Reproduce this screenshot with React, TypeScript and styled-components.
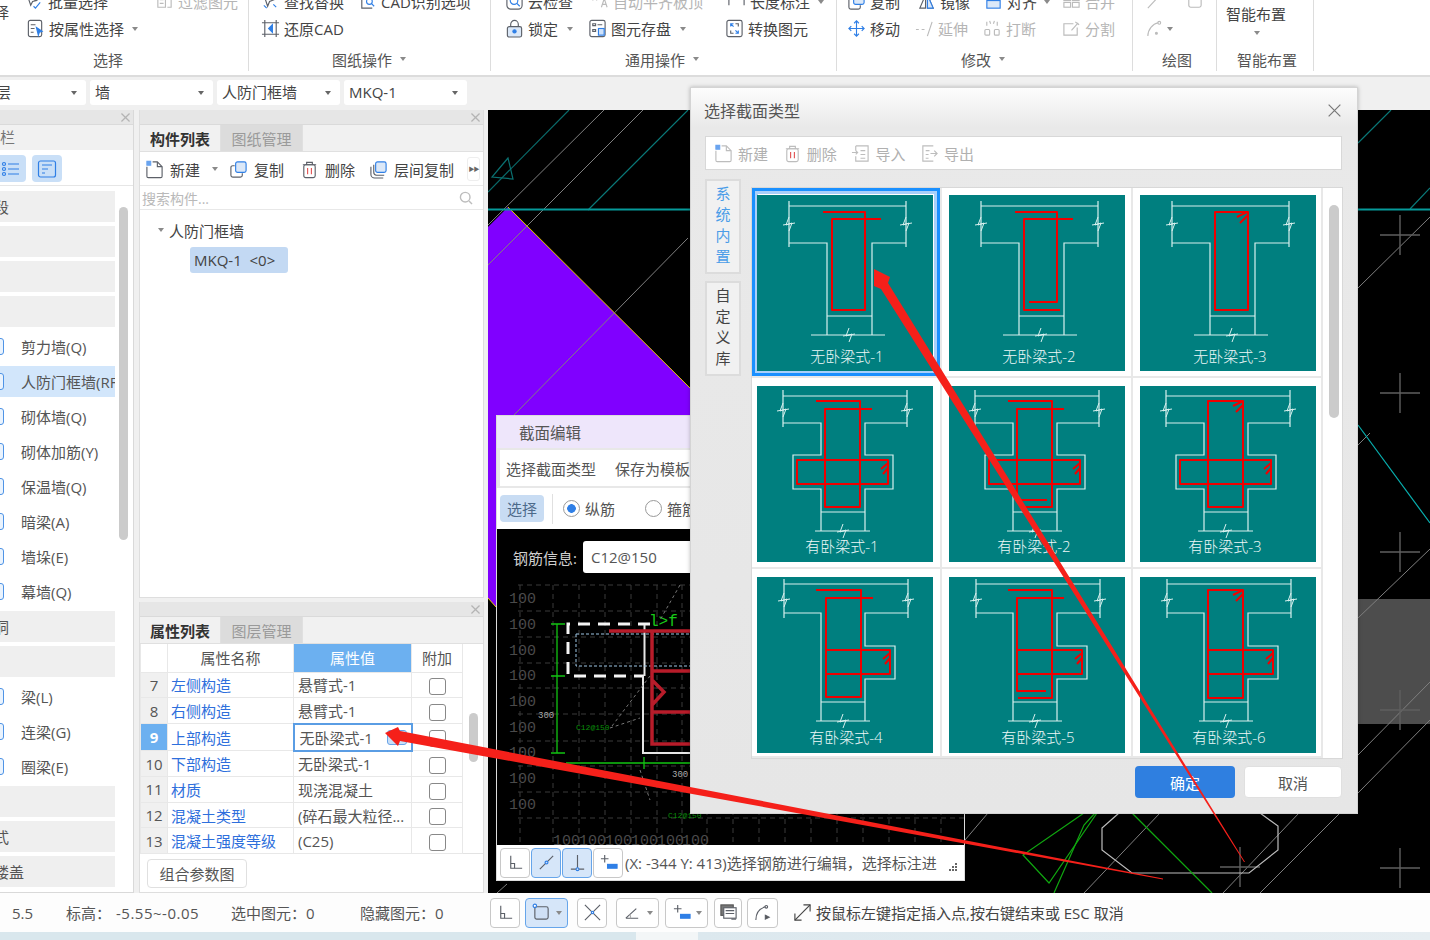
import React from "react";
import styled, { createGlobalStyle } from "styled-components";

const FONT = `"Open Sans", "Noto Sans CJK SC", "Noto Sans", "Liberation Sans", sans-serif`;

const Global = createGlobalStyle`
  html, body { margin: 0; padding: 0; background: #f0f0f0; }
  * { box-sizing: border-box; }
`;

const Page = styled.div`
  position: relative;
  width: 1430px;
  height: 940px;
  overflow: hidden;
  display: flex;
  flex-direction: column;
  font-family: ${FONT};
  font-size: 15px;
  color: #444;
  background: #f0f0f0;
`;

/* ---------- icons ---------- */
const BLUE = "#2f7fe6";
type IconName =
  | "batch" | "filter" | "propsel" | "find" | "cadopt" | "restore" | "cloud" | "lock" | "save" | "convert"
  | "autoflat" | "dim" | "copy" | "mirror" | "align" | "merge" | "move" | "extend" | "break" | "split"
  | "draw1" | "draw2" | "arc" | "new" | "trash" | "layercopy" | "import" | "export" | "corner" | "rectsel"
  | "cross" | "angle" | "plusbar" | "monitor" | "arcdot" | "resize" | "ortho" | "perp" | "slope" | "listbtn" | "detailbtn";

const Glyph: React.FC<{ name: IconName }> = ({ name }) => {
  switch (name) {
    case "batch": return <><path d="M3 5l3 9 2-4 4-1z" /><path d="M9 15l2 2 5-6" stroke={BLUE} /></>;
    case "filter": return <><path d="M3 4h8v12H3zM13 4h4v12h-4" /><path d="M5 8h4M5 12h4" /></>;
    case "propsel": return <><rect x="2.5" y="1.5" width="14" height="17" rx="2" /><path d="M5 6h5M5 10h4M5 14h3" /><path d="M11 9l6 4-3 1-1 3z" fill={BLUE} stroke={BLUE} /></>;
    case "find": return <><path d="M3 3l4 12 2-5 5-2z" /><path d="M3 14l3 3" stroke={BLUE} /><path d="M13 13l3 3" stroke={BLUE} /></>;
    case "cadopt": return <><path d="M4 2v15h11" /><circle cx="12" cy="10" r="3" stroke={BLUE} /><path d="M14 12l3 3" stroke={BLUE} /></>;
    case "restore": return <><path d="M1 4h18M1 16h18M4 1v18M16 1v18" /><path d="M12 6l-4 4 4 4z" fill={BLUE} stroke={BLUE} /></>;
    case "cloud": return <><rect x="2" y="2" width="16" height="16" rx="4" /><circle cx="9.5" cy="9" r="4" stroke={BLUE} /><path d="M12.5 12l3 3" stroke={BLUE} /></>;
    case "lock": return <><rect x="2.5" y="8" width="15" height="11" rx="2" fill="#dbe8f8" /><path d="M6 8V5.5a4 4 0 0 1 8 0V8" /><circle cx="10" cy="13" r="1.7" fill={BLUE} stroke={BLUE} /></>;
    case "save": return <><rect x="2" y="1.5" width="16" height="17" rx="2" /><path d="M5 5h3v2H5zM10 6h5M5 11h3v2H5z" /><rect x="11" y="10" width="6" height="7" fill="#cfe2fa" stroke={BLUE} /></>;
    case "convert": return <><rect x="2" y="1.5" width="16" height="17" rx="2" /><path d="M6 8V5h3M6 5l3 3" stroke={BLUE} /><path d="M14 12v3h-3M14 15l-3-3" stroke={BLUE} /><path d="M11 5h3v3M6 12v3h3" /></>;
    case "autoflat": return <><path d="M3 3v6M7 3v6M3 6h4" /><path d="M12 16l3-9 3 9M13 13h4" /></>;
    case "dim": return <><path d="M2 2v12M18 2v12M2 5h16" /><path d="M2 5l3-2M18 5l-3-2" stroke={BLUE} /></>;
    case "copy": return <><rect x="7" y="2" width="11" height="11" rx="2" fill="#dbe8f8" stroke={BLUE} /><path d="M6 6H4a2 2 0 0 0-2 2v8a2 2 0 0 0 2 2h8a2 2 0 0 0 2-2v-2" /></>;
    case "mirror": return <><path d="M9 3L3 17h6zM11 3l6 14h-6z" /><path d="M11 3l6 14h-6z" fill="#dbe8f8" stroke={BLUE} /></>;
    case "align": return <><rect x="3" y="9" width="14" height="8" fill="#dbe8f8" stroke={BLUE} /><path d="M3 6h14" /><path d="M3 3h14" stroke={BLUE} /></>;
    case "merge": return <><rect x="2" y="4" width="7" height="5" /><rect x="11" y="4" width="7" height="5" /><rect x="2" y="11" width="7" height="5" /><rect x="11" y="11" width="7" height="5" /></>;
    case "move": return <g stroke={BLUE}><path d="M10 2v16M2 10h16" /><path d="M7.5 4.5L10 2l2.5 2.5M7.5 15.5L10 18l2.5-2.5M4.5 7.5L2 10l2.5 2.5M15.5 7.5L18 10l-2.5 2.5" /></g>;
    case "extend": return <><path d="M1 11h3M7 11h3" /><path d="M13 18L18 3" /></>;
    case "break": return <><rect x="2" y="11" width="5" height="6" rx="1" /><rect x="12" y="11" width="5" height="6" rx="1" /><path d="M4 3v4M15 3v4M7 2l1 3M12 2l-1 3" /></>;
    case "split": return <><path d="M12 5H2v12h14V9" /><path d="M10 12l7-8" /><path d="M14 3l4 3" /></>;
    case "draw1": return <><path d="M3 17L15 4" /><circle cx="16" cy="3.5" r="1.4" /></>;
    case "draw2": return <rect x="4" y="3" width="13" height="13" rx="2" />;
    case "arc": return <><path d="M3 18c0-7 5-13 11-14" /><circle cx="15" cy="4" r="1.5" /><circle cx="12" cy="15" r="1" fill="currentColor" /></>;
    case "new": return <><path d="M8 2h5l5 5v10a1.5 1.5 0 0 1-1.5 1.5h-13A1.5 1.5 0 0 1 2 17V7" /><path d="M13 2v5h5" /><path d="M2 1.5h4v4H2z" fill="#6aa4ef" stroke="#6aa4ef" /></>;
    case "trash": return <><path d="M3 5h14M7 5V2.5h6V5" /><rect x="4" y="5" width="12" height="13.5" rx="2" /><path d="M8 8.5v6.5M12 8.5v6.5" stroke="#e25757" /></>;
    case "layercopy": return <><rect x="7" y="2" width="11" height="11" rx="2" fill="#dbe8f8" stroke={BLUE} /><path d="M5 5v8a3 3 0 0 0 3 3h8M2 7v8a4 4 0 0 0 4 4h9" /></>;
    case "import": return <><path d="M5 2h13v16H5V13M5 7V2" /><path d="M10 7h5M10 11h5M10 15h5" /><path d="M1 9h6M5 7l2 2-2 2" /></>;
    case "export": return <><path d="M14 2H3v16h11" /><path d="M6 7h4M6 11h3M6 15h3" /><path d="M11 10h7M15 7l3 3-3 3" /></>;
    case "corner": return <><path d="M5 3v13h12" /><path d="M5 11h4v5" /></>;
    case "rectsel": return <><rect x="3" y="4" width="14" height="13" rx="2" fill="#cfe0f6" /><circle cx="3" cy="3" r="1.8" stroke={BLUE} fill="#fff" /></>;
    case "cross": return <><path d="M2 2l16 16M18 2L2 18" /><circle cx="10" cy="10" r="1.2" stroke={BLUE} fill="#fff" /></>;
    case "angle": return <><path d="M3 16h13M3 16l11-10" /><path d="M8 16a6 6 0 0 0-1-4" stroke="#aaa" /></>;
    case "plusbar": return <><path d="M6 2v8M2 6h8" /><rect x="9" y="12" width="10" height="4" fill={BLUE} stroke={BLUE} /></>;
    case "monitor": return <><rect x="2" y="2" width="13" height="11" fill="#777" stroke="#555" /><rect x="5" y="5" width="13" height="11" fill="#fff" /><path d="M7 8h9M7 11h9" /><path d="M13 17h5" /></>;
    case "arcdot": return <><path d="M3 18c0-7 3-12 10-14" /><circle cx="14" cy="4" r="1.4" /><path d="M13 13l4 2-4 2z" fill="#555" /></>;
    case "resize": return <><path d="M2 18L18 2" /><path d="M11 2h7v7M2 11v7h7" /></>;
    case "ortho": return <><path d="M10 2v16M3 18h14" /><circle cx="10" cy="17" r="1.2" stroke={BLUE} /></>;
    case "perp": return <><path d="M10 2v15M3 17h14" /><circle cx="10" cy="17" r="1.5" stroke={BLUE} fill="#cfe0f6" /></>;
    case "slope": return <><path d="M3 17L17 3" /><circle cx="10" cy="10" r="1.5" stroke={BLUE} fill="#cfe0f6" /></>;
    case "listbtn": return <g stroke={BLUE}><circle cx="3" cy="5" r="1.5" /><circle cx="3" cy="10" r="1.5" /><circle cx="3" cy="15" r="1.5" /><path d="M7 5h11M7 10h11M7 15h11" /></g>;
    case "detailbtn": return <g stroke={BLUE}><rect x="1.5" y="2" width="17" height="16" rx="2" /><path d="M5 6h10M5 10h6M5 14h3" /></g>;
  }
};

const IconSvg = styled.svg<{ $size: number; $color: string }>`
  flex: none;
  width: ${(p) => p.$size}px;
  height: ${(p) => p.$size}px;
  color: ${(p) => p.$color};
  fill: none;
  stroke: currentColor;
  stroke-width: 1.2;
`;
const Icon: React.FC<{ name: IconName; size?: number; color?: string }> = ({ name, size = 19, color = "#5c6068" }) => (
  <IconSvg $size={size} $color={color} viewBox="0 0 20 20"><Glyph name={name} /></IconSvg>
);

const Caret = styled.span<{ $ml?: number }>`
  flex: none;
  margin-left: ${(p) => p.$ml ?? 8}px;
  width: 0;
  height: 0;
  border-left: 3.5px solid transparent;
  border-right: 3.5px solid transparent;
  border-top: 4px solid #8a8a8a;
`;

/* ---------- ribbon ---------- */
const Ribbon = styled.header`
  flex: none;
  height: 77px;
  background: #fff;
  border-bottom: 2px solid #dcdcdc;
  display: flex;
  align-items: flex-start;
  overflow: hidden;
`;
const Group = styled.section<{ $w: number }>`
  flex: none;
  width: ${(p) => p.$w}px;
  height: 71px;
  border-right: 1px solid #dddddd;
  display: flex;
  flex-direction: column;
`;
const GroupBody = styled.div`
  height: 47px;
  display: flex;
  align-items: flex-start;
`;
const Rows = styled.div`
  margin-top: -12px;
  display: flex;
  flex-direction: column;
`;
const Row = styled.div<{ $pad: number }>`
  height: 27px;
  padding-left: ${(p) => p.$pad}px;
  display: flex;
  align-items: center;
  white-space: nowrap;
`;
const Tool = styled.span<{ $w?: number; $off?: boolean }>`
  flex: none;
  display: inline-flex;
  align-items: center;
  gap: 4px;
  width: ${(p) => (p.$w ? `${p.$w}px` : "auto")};
  color: ${(p) => (p.$off ? "#b5b5b5" : "#444")};
  font-size: 15px;
`;
const GroupLabel = styled.div<{ $pad: number }>`
  height: 24px;
  padding-left: ${(p) => p.$pad}px;
  display: flex;
  align-items: center;
  font-size: 15px;
  color: #555;
`;
const CutBig = styled.div`
  flex: none;
  width: 25px;
  height: 30px;
  padding-top: 2px;
  overflow: hidden;
  font-size: 15px;
  line-height: 20px;
  & > span { margin-left: -21px; display: block; white-space: nowrap; }
`;
const SmartStack = styled.div`
  width: 100%;
  padding: 4px 0 0 9px;
  display: flex;
  flex-direction: column;
  line-height: 20px;
  & > i { margin: 7px 0 0 28px; }
`;

type T = { n?: IconName; t: string; w?: number; off?: boolean; caret?: boolean };
const ToolItem: React.FC<{ it: T }> = ({ it }) => (
  <Tool $w={it.w} $off={it.off}>
    {it.n && <Icon name={it.n} color={it.off ? "#bbb" : "#5c6068"} />}
    {it.t}
    {it.caret && <Caret $ml={3} />}
  </Tool>
);

/* ---------- combos ---------- */
const ComboBar = styled.div`
  flex: none;
  height: 33px;
  padding-top: 3px;
  margin-left: -37px;
  display: flex;
  gap: 4px;
`;
const Combo = styled.div<{ $pad?: number }>`
  width: 123px;
  height: 25px;
  padding: 0 9px 2px ${(p) => p.$pad ?? 5}px;
  background: #fff;
  border-radius: 3px;
  display: flex;
  align-items: center;
  justify-content: space-between;
  font-size: 15px;
  color: #444;
  & > i { margin: 2px 0 0; border-top-color: #666; }
`;

/* ---------- main ---------- */
const Main = styled.main`
  flex: none;
  height: 783px;
  display: flex;
`;
const LeftPanel = styled.aside`
  flex: none;
  width: 134px;
  background: #fff;
  border-right: 1px solid #d9d9d9;
  border-bottom: 1px solid #d9d9d9;
  display: flex;
  flex-direction: column;
  overflow: hidden;
`;
const CloseStrip = styled.div`
  flex: none;
  height: 15px;
  background: #e6e6e6;
  border-bottom: 1px solid #dadada;
  display: flex;
  align-items: center;
  justify-content: flex-end;
  padding-right: 3px;
  color: #b0b0b0;
`;
const LeftTitle = styled.div`
  flex: none;
  height: 25px;
  padding-bottom: 2px;
  background: #f1f1f1;
  display: flex;
  align-items: center;
  font-size: 15px;
  color: #777;
  white-space: nowrap;
  & > span { margin-left: -30px; }
`;
const LeftIcons = styled.div`
  flex: none;
  height: 36px;
  padding: 5px 0 3px;
  display: flex;
  gap: 6px;
  border-bottom: 1px solid #e6e6e6;
  margin-left: -4px;
`;
const IconTab = styled.span`
  width: 30px;
  height: 27px;
  border-radius: 4px;
  background: #c9dff7;
  display: flex;
  align-items: center;
  justify-content: center;
`;
const LeftBody = styled.div`
  flex: 1;
  display: flex;
  min-height: 0;
`;
const NavList = styled.div`
  flex: none;
  width: 115px;
  padding-top: 5px;
  display: flex;
  flex-direction: column;
  gap: 4px;
`;
const NavSection = styled.div`
  height: 31px;
  background: #efefef;
  display: flex;
  align-items: center;
  overflow: hidden;
  font-size: 15px;
  color: #555;
  white-space: nowrap;
  & > span { margin-left: -6px; }
`;
const NavItem = styled.div<{ $on?: boolean }>`
  height: 31px;
  background: ${(p) => (p.$on ? "#d2e6fb" : "transparent")};
  display: flex;
  align-items: center;
  overflow: hidden;
  font-size: 15px;
  color: #555;
  white-space: nowrap;
`;
const NavGlyph = styled.span`
  flex: none;
  width: 15px;
  height: 17px;
  margin-left: -11px;
  margin-right: 17px;
  border: 1.5px solid #4f94e6;
  border-radius: 3px;
  background: #eaf3fd;
`;
const ScrollTrack = styled.div<{ $w: number }>`
  flex: none;
  width: ${(p) => p.$w}px;
`;
const ScrollThumb = styled.div<{ $top: number; $h: number; $x: number; $t?: number }>`
  margin: ${(p) => p.$top}px 0 0 ${(p) => p.$x}px;
  width: ${(p) => p.$t ?? 9}px;
  height: ${(p) => p.$h}px;
  border-radius: 5px;
  background: #cbcbcb;
`;

const MiddleCol = styled.div`
  flex: none;
  width: 345px;
  margin-left: 5px;
  display: flex;
  flex-direction: column;
  gap: 4px;
`;
const Panel = styled.section<{ $h: number }>`
  flex: none;
  height: ${(p) => p.$h}px;
  background: #fff;
  border: 1px solid #dedede;
  border-top: none;
  display: flex;
  flex-direction: column;
`;
const Tabs = styled.div`
  flex: none;
  height: 27px;
  background: #f1f1f1;
  border-bottom: 1px solid #e0e0e0;
  display: flex;
`;
const TabBtn = styled.div<{ $on?: boolean }>`
  width: ${(p) => (p.$on ? 81 : 82)}px;
  background: ${(p) => (p.$on ? "#f1f1f1" : "#dcdcdc")};
  color: ${(p) => (p.$on ? "#333" : "#9a9a9a")};
  font-weight: ${(p) => (p.$on ? 700 : 400)};
  display: flex;
  align-items: center;
  justify-content: center;
  border-right: 1px solid #e0e0e0;
  font-size: 15px;
`;
const CompToolbar = styled.div`
  flex: none;
  height: 34px;
  padding: 1px 0 0 5px;
  display: flex;
  align-items: center;
  border-bottom: 1px solid #e8e8e8;
  white-space: nowrap;
  & > span { gap: 6px; }
`;
const MoreBtn = styled.span`
  margin-left: 13px;
  width: 13px;
  height: 24px;
  border: 1px solid #eee;
  border-radius: 3px;
  font-size: 6px;
  line-height: 22px;
  text-align: center;
  color: #666;
  letter-spacing: -1px;
`;
const SearchRow = styled.div`
  flex: none;
  height: 24px;
  padding: 0 10px 0 2px;
  display: flex;
  align-items: center;
  justify-content: space-between;
  font-size: 14px;
  color: #b9b9b9;
  border-bottom: 1px solid #e8e8e8;
`;
const TreeBox = styled.div`
  flex: 1;
  padding: 8px 0 0 18px;
`;
const TreeHead = styled.div`
  display: flex;
  align-items: center;
  gap: 5px;
  height: 24px;
  color: #444;
  font-size: 15px;
`;
const TreeChip = styled.div`
  margin: 5px 0 0 32px;
  width: 98px;
  height: 26px;
  border-radius: 3px;
  background: #c3d9f3;
  padding-left: 4px;
  display: flex;
  align-items: center;
  color: #444;
  font-size: 15px;
  white-space: pre;
`;

const PropTableWrap = styled.div`
  flex: none;
  display: flex;
  height: 210px;
  border-bottom: 1px solid #e3e3e3;
`;
const PropTable = styled.table`
  flex: none;
  width: 322px;
  table-layout: fixed;
  border-collapse: collapse;
  font-size: 15px;
  height: 210px;
`;
const HeadCell = styled.th<{ $on?: boolean }>`
  font-weight: 400;
  height: 28px;
  padding: 0;
  background: ${(p) => (p.$on ? "#6cb0f0" : "#fff")};
  color: ${(p) => (p.$on ? "#fff" : "#555")};
  border: 1.5px solid #e8e8e8;
  border-top: none;
`;
const NumCell = styled.td<{ $on?: boolean }>`
  background: ${(p) => (p.$on ? "#6cb0f0" : "#f0f0f0")};
  color: ${(p) => (p.$on ? "#fff" : "#555")};
  font-weight: ${(p) => (p.$on ? 700 : 400)};
  text-align: center;
  padding: 0;
  border: 1.5px solid #e8e8e8;
`;
const NameCell = styled.td`
  color: #2e6fdc;
  padding: 0 0 0 3px;
  white-space: nowrap;
  overflow: hidden;
  border: 1.5px solid #e8e8e8;
`;
const ValueCell = styled.td<{ $on?: boolean }>`
  padding: 0 ${(p) => (p.$on ? 0 : 3)}px 0 ${(p) => (p.$on ? 5 : 4)}px;
  color: #555;
  white-space: nowrap;
  overflow: hidden;
  text-overflow: ellipsis;
  border: ${(p) => (p.$on ? "2px solid #5a9de4" : "1.5px solid #e8e8e8")};
`;
const ValueInner = styled.div`
  display: flex;
  align-items: center;
  justify-content: space-between;
  padding-right: 4px;
  & > i {
    width: 20px;
    height: 15px;
    border-radius: 3px;
    background: #c9dff7;
    border: 1px solid #6aa4e8;
  }
`;
const CheckCell = styled.td`
  padding: 0;
  text-align: center;
  border: 1.5px solid #e8e8e8;
`;
const CheckBox = styled.span`
  display: inline-block;
  vertical-align: middle;
  width: 17px;
  height: 17px;
  border: 1px solid #888;
  border-radius: 3px;
  background: #fff;
`;
const PanelFoot = styled.div`
  flex: 1;
  padding: 5px 0 0 7px;
`;
const OutlineBtn = styled.div`
  width: 100px;
  height: 29px;
  border: 1.5px solid #e0e0e0;
  border-radius: 4px;
  display: flex;
  align-items: center;
  justify-content: center;
  color: #555;
  font-size: 15px;
`;

const Canvas = styled.div`
  flex: none;
  margin-left: 4px;
  width: 942px;
  height: 783px;
  background: #000;
`;
const CanvasSvg = styled.svg`
  display: block;
  width: 942px;
  height: 783px;
`;

/* ---------- status ---------- */
const StatusBar = styled.footer`
  flex: none;
  height: 39px;
  background: #fdfdfd;
  padding-left: 12px;
  display: flex;
  align-items: center;
  font-size: 15px;
  color: #555;
  white-space: nowrap;
`;
const StatusText = styled.span<{ $w: number; $ls?: number }>`
  flex: none;
  width: ${(p) => p.$w}px;
  font-size: 15px;
  letter-spacing: ${(p) => p.$ls ?? 0}px;
`;
const SquareBtn = styled.span<{ $w?: number; $ml?: number; $on?: boolean }>`
  flex: none;
  width: ${(p) => p.$w ?? 30}px;
  height: 30px;
  margin-left: ${(p) => p.$ml ?? 0}px;
  border: 1.5px solid ${(p) => (p.$on ? "#66a5ea" : "#c8c8c8")};
  border-radius: 4px;
  background: ${(p) => (p.$on ? "#d6e6f9" : "#fff")};
  display: inline-flex;
  align-items: center;
  justify-content: center;
  gap: 5px;
`;
const HintSpacer = styled.span`
  flex: none;
  width: 11px;
`;
const BottomStrip = styled.div`
  flex: 1;
  background: linear-gradient(90deg, #d9e7ed 0, #d9e7ed 636px, #f3f6f7 636px, #f3f6f7 698px, #dce8ee 698px, #e6edf1 100%);
`;

/* ---------- section window ---------- */
const SectionWin = styled.div`
  position: absolute;
  left: 496px;
  top: 415px;
  width: 469px;
  height: 466px;
  background: #e8e8e8;
  border: 1px solid #dcdcdc;
  display: flex;
  flex-direction: column;
`;
const SectionTitle = styled.div`
  flex: none;
  height: 32px;
  padding-left: 22px;
  background: #eee6fb;
  display: flex;
  align-items: center;
  font-size: 15.5px;
  color: #555;
`;
const SectionMenu = styled.div`
  flex: none;
  height: 36px;
  margin: 2px 0 0 3px;
  padding-left: 6px;
  background: #fff;
  display: flex;
  align-items: center;
  gap: 19px;
  color: #555;
  font-size: 15px;
`;
const SectionTools = styled.div`
  flex: none;
  height: 41px;
  margin-top: 2px;
  background: #fff;
  padding-left: 3px;
  display: flex;
  align-items: center;
  font-size: 15px;
  color: #555;
`;
const SelectChip = styled.span`
  width: 44px;
  height: 27px;
  background: #c8dcf3;
  border-radius: 4px;
  color: #4d6a8a;
  display: flex;
  align-items: center;
  justify-content: center;
`;
const VSep = styled.span`
  width: 1px;
  height: 30px;
  margin: 0 8px;
  background: #e0e0e0;
`;
const Radio = styled.span<{ $on?: boolean; $ml: number }>`
  flex: none;
  margin: 0 5px 0 ${(p) => p.$ml}px;
  width: 17px;
  height: 17px;
  border-radius: 50%;
  border: 1px solid #999;
  background: ${(p) => (p.$on ? "radial-gradient(circle, #2f7fe6 0 4px, #fff 4.6px)" : "#fff")};
`;
const SectionDraw = styled.div`
  position: relative;
  flex: none;
  height: 316px;
  background: #000;
  overflow: hidden;
`;
const DrawSvg = styled.svg`
  display: block;
  width: 467px;
  height: 316px;
`;
const RebarForm = styled.div`
  position: absolute;
  left: 16px;
  top: 12px;
  display: flex;
  align-items: center;
  gap: 6px;
  color: #cfcfcf;
  font-size: 15px;
`;
const RebarInput = styled.span`
  width: 300px;
  height: 32px;
  padding-left: 8px;
  background: #fff;
  border-radius: 3px;
  color: #555;
  display: flex;
  align-items: center;
`;
const SectionFoot = styled.div`
  flex: none;
  flex-grow: 1;
  background: #fff;
  padding-left: 3px;
  display: flex;
  align-items: center;
  gap: 1px;
  font-size: 15px;
  color: #555;
  white-space: nowrap;
  overflow: hidden;
`;
const FootMsg = styled.span`
  width: 313px;
  overflow: hidden;
  margin-left: 1px;
`;
const Grip = styled.svg`
  flex: none;
  width: 10px;
  height: 10px;
  margin: 10px 0 0 9px;
`;

/* ---------- main dialog ---------- */
const Dialog = styled.div`
  position: absolute;
  left: 690px;
  top: 87px;
  width: 668px;
  height: 727px;
  padding: 0 15px 0 14px;
  background: linear-gradient(180deg, #fdfdfd 0, #e9e9e9 40px, #e6e6e6 100%);
  border: 1px solid #d4d4d4;
  box-shadow: 0 0 4px rgba(0, 0, 0, 0.25);
  display: flex;
  flex-direction: column;
`;
const DialogHead = styled.div`
  flex: none;
  height: 48px;
  display: flex;
  align-items: center;
  justify-content: space-between;
  padding: 0 1px 4px 0;
  margin-left: -1px;
  font-size: 16px;
  color: #555;
`;
const DialogTools = styled.div`
  flex: none;
  height: 34px;
  padding-left: 8px;
  background: #fff;
  border: 1px solid #d8d8d8;
  display: flex;
  align-items: center;
  gap: 14.7px;
  color: #b0b0b0;
  font-size: 15px;
`;
const DialogTool = styled.span`
  display: inline-flex;
  align-items: center;
  gap: 5px;
`;
const DialogBody = styled.div`
  flex: none;
  display: flex;
  height: 588px;
`;
const SideTabs = styled.div`
  flex: none;
  width: 36px;
  margin: 9px 10px 0 0;
  display: flex;
  flex-direction: column;
  gap: 7px;
`;
const SideTab = styled.div<{ $on?: boolean }>`
  height: 95px;
  padding-bottom: 4px;
  background: #f1f1f1;
  border: 2px solid #dcdcdc;
  color: ${(p) => (p.$on ? "#4a9de8" : "#444")};
  display: flex;
  flex-direction: column;
  align-items: center;
  justify-content: center;
  gap: 6px;
  line-height: 15px;
  font-size: 15px;
`;
const GalleryFrame = styled.div`
  flex: none;
  width: 592px;
  height: 572px;
  margin-top: 17px;
  background: #fff;
  border: 1px solid #d8d8d8;
  display: flex;
  overflow: hidden;
`;
const Gallery = styled.div`
  flex: none;
  width: 571px;
  display: grid;
  grid-template-columns: 190px 191px 190px;
  grid-template-rows: 190px 191px 189px;
`;
const Cell = styled.div<{ $on?: boolean }>`
  padding: 8px 0 0 7px;
  border-right: 2px solid #e8e8e8;
  border-bottom: 2px solid #e8e8e8;
  box-shadow: ${(p) => (p.$on ? "inset 0 0 0 3px #1a90ff, inset 0 0 0 6px #a9d0fa" : "none")};
  overflow: hidden;
  &:nth-child(-n + 3) { padding-top: 7px; }
  &:nth-child(3n + 1) { padding-left: 5px; }
`;
const ThumbSvg = styled.svg`
  width: 176px;
  height: 176px;
  background: #007f7f;
  display: block;
`;
const ThumbLabel = styled.text`
  font-family: ${FONT};
  font-size: 15px;
  font-weight: 300;
  fill: #eef8f8;
  text-anchor: middle;
`;
const DialogFoot = styled.div`
  flex: none;
  padding-top: 8px;
  display: flex;
  justify-content: flex-end;
  gap: 9px;
`;
const PrimaryBtn = styled.div`
  width: 100px;
  height: 32px;
  border-radius: 4px;
  background: #2f7fe0;
  color: #fff;
  display: flex;
  align-items: center;
  justify-content: center;
  font-size: 15px;
`;
const GhostBtn = styled(PrimaryBtn)`
  width: 98px;
  background: #fff;
  border: 1px solid #e0e0e0;
  color: #555;
`;

const ArrowLayer = styled.svg`
  position: absolute;
  left: 0;
  top: 0;
  width: 1430px;
  height: 940px;
  pointer-events: none;
`;

const CloseX: React.FC<{ size?: number; color?: string }> = ({ size = 9, color = "#b4b4b4" }) => (
  <svg width={size} height={size} viewBox="0 0 10 10" fill="none" stroke={color} strokeWidth={size > 10 ? 0.9 : 1.4}>
    <path d="M0.5 0.5l9 9M9.5 0.5l-9 9" />
  </svg>
);

/* ---------- data ---------- */
type Nav = { s?: string; t?: string; on?: boolean };
const NAV: Nav[] = [
  { s: "段" }, { s: "" }, { s: "" }, { s: "" },
  { t: "剪力墙(Q)" }, { t: "人防门框墙(RFM)", on: true }, { t: "砌体墙(Q)" }, { t: "砌体加筋(Y)" },
  { t: "保温墙(Q)" }, { t: "暗梁(A)" }, { t: "墙垛(E)" }, { t: "幕墙(Q)" },
  { s: "洞" }, { s: "" },
  { t: "梁(L)" }, { t: "连梁(G)" }, { t: "圈梁(E)" },
  { s: "" }, { s: "式" }, { s: "楼盖" },
];

const ROWS = [
  ["7", "左侧构造", "悬臂式-1"],
  ["8", "右侧构造", "悬臂式-1"],
  ["9", "上部构造", "无卧梁式-1"],
  ["10", "下部构造", "无卧梁式-1"],
  ["11", "材质", "现浇混凝土"],
  ["12", "混凝土类型", "(碎石最大粒径..."],
  ["13", "混凝土强度等级", "(C25)"],
];

const OUT_T = "M32 6V52M149 6V52M32 11H149M32 48H70V140M149 48H115V140M70 121H115M54 140H128";
const OUT_B = "M26 4V41M150 4V41M26 10H150M26 37H64V69H36V103H64V145M150 37H108V69H136V103H108V145M64 126H108M58 145H113";
const OUT_O = "M27 2V41M151 2V41M27 7H151M27 36H64V144M151 36H108V69H138V102H108V144M64 125H108M59 144H113";
const SILL_B = "M40 74H131V98H40ZM131 77L124 83M131 82L126 88";
const SILL_O = "M68 73H133V97H68M133 76L126 82M133 81L128 87";

type Th = { l: string; o: string; r: string; b: [number, number][]; x: number; y: number };
const TB: [number, number][] = [[32, 29], [149, 29], [92, 140]];
const BB: [number, number][] = [[26, 24], [150, 24], [86, 145]];
const OB: [number, number][] = [[27, 23], [151, 23], [86, 144]];
const THUMBS: Th[] = [
  { l: "无卧梁式-1", o: OUT_T, r: "M66 17H108V115H75V24H124", b: TB, x: 90, y: 167 },
  { l: "无卧梁式-2", o: OUT_T, r: "M66 17H108V107H80M124 24H75V115H111", b: TB, x: 90, y: 167 },
  { l: "无卧梁式-3", o: OUT_T, r: "M75 17H108V115H75ZM97 22L107 17M100 28L108 20", b: TB, x: 90, y: 167 },
  { l: "有卧梁式-1", o: OUT_B, r: "M59 15H103V121H68V23H115" + SILL_B, b: BB, x: 85, y: 166 },
  { l: "有卧梁式-2", o: OUT_B, r: "M59 15H103V121H75M115 23H68V114H98" + SILL_B, b: BB, x: 85, y: 166 },
  { l: "有卧梁式-3", o: OUT_B, r: "M68 15H103V121H68ZM93 20L103 15M96 26L103 19" + SILL_B, b: BB, x: 85, y: 166 },
  { l: "有卧梁式-4", o: OUT_O, r: "M59 13H104V120H69V21H116" + SILL_O, b: OB, x: 89, y: 166 },
  { l: "有卧梁式-5", o: OUT_O, r: "M59 13H103V121H69M115 21H68V114H97" + SILL_O, b: OB, x: 89, y: 166 },
  { l: "有卧梁式-6", o: OUT_O, r: "M68 13H103V121H68ZM93 18L103 13M96 24L103 17" + SILL_O, b: OB, x: 89, y: 166 },
];

const Thumb: React.FC<{ th: Th }> = ({ th }) => (
  <ThumbSvg viewBox="0 0 176 176">
    <path d={th.o} fill="none" stroke="#d8f0ee" strokeWidth={1.2} />
    {th.b.map(([x, y]) => (
      <path key={`${x}-${y}`} d={`M${x - 6} ${y + 1}L${x + 6} ${y - 1}M${x} ${y - 7}L${x - 3} ${y + 1}L${x + 3} ${y - 1}L${x} ${y + 7}`} fill="none" stroke="#d8f0ee" strokeWidth={1} />
    ))}
    <path d={th.r} fill="none" stroke="#f00000" strokeWidth={2} strokeLinejoin="round" />
    <ThumbLabel x={th.x} y={th.y}>{th.l}</ThumbLabel>
  </ThumbSvg>
);

const GRID_X = [520, 553, 579, 605, 631, 657, 682, 707, 733, 759, 785, 811, 837, 863, 889, 915, 941];
const GRID_Y = [585, 611, 637, 663, 688, 714, 741, 766, 792, 818];
const crosses = [[1400, 235], [1400, 393], [1400, 552], [1400, 710], [1400, 868], [1240, 867]];
const canvasLines = [
  "M488 225L604 110", "M488 265L643 110", "M514 415L688 238",
  "M1358 288L1430 217", "M1358 445L1370 433", "M1358 618L1430 549", "M1358 755L1430 682", "M1358 793L1430 720",
  "M988 813L965 840", "M1160 813L1084 893", "M1299 813L1223 893", "M1340 813L1260 893",
  "M497 893L507 884",
];

export default function App() {
  return (
    <Page>
      <Global />
      <Ribbon>
        <Group $w={249}>
          <GroupBody>
            <CutBig><span>选择</span></CutBig>
            <Rows>
              <Row $pad={0}>
                <ToolItem it={{ n: "batch", t: "批量选择", w: 130 }} />
                <ToolItem it={{ n: "filter", t: "过滤图元", off: true }} />
              </Row>
              <Row $pad={1}>
                <ToolItem it={{ n: "propsel", t: "按属性选择" }} />
                <Caret />
              </Row>
            </Rows>
          </GroupBody>
          <GroupLabel $pad={93}>选择</GroupLabel>
        </Group>
        <Group $w={242}>
          <GroupBody>
            <Rows>
              <Row $pad={12}>
                <ToolItem it={{ n: "find", t: "查找替换", w: 97 }} />
                <ToolItem it={{ n: "cadopt", t: "CAD识别选项" }} />
              </Row>
              <Row $pad={12}><ToolItem it={{ n: "restore", t: "还原CAD" }} /></Row>
            </Rows>
          </GroupBody>
          <GroupLabel $pad={83}>图纸操作<Caret /></GroupLabel>
        </Group>
        <Group $w={346}>
          <GroupBody>
            <Rows>
              <Row $pad={14}>
                <ToolItem it={{ n: "cloud", t: "云检查", w: 85 }} />
                <ToolItem it={{ n: "autoflat", t: "自动平齐板顶", w: 137, off: true }} />
                <ToolItem it={{ n: "dim", t: "长度标注" }} />
                <Caret />
              </Row>
              <Row $pad={14}>
                <Tool $w={83}><Icon name="lock" />锁定<Caret $ml={5} /></Tool>
                <Tool $w={137}><Icon name="save" />图元存盘<Caret $ml={5} /></Tool>
                <ToolItem it={{ n: "convert", t: "转换图元" }} />
              </Row>
            </Rows>
          </GroupBody>
          <GroupLabel $pad={134}>通用操作<Caret /></GroupLabel>
        </Group>
        <Group $w={296}>
          <GroupBody>
            <Rows>
              <Row $pad={10}>
                <ToolItem it={{ n: "copy", t: "复制", w: 70 }} />
                <ToolItem it={{ n: "mirror", t: "镜像", w: 67 }} />
                <Tool $w={78}><Icon name="align" />对齐<Caret $ml={3} /></Tool>
                <ToolItem it={{ n: "merge", t: "合并", off: true }} />
              </Row>
              <Row $pad={10}>
                <ToolItem it={{ n: "move", t: "移动", w: 68 }} />
                <ToolItem it={{ n: "extend", t: "延伸", w: 68, off: true }} />
                <ToolItem it={{ n: "break", t: "打断", w: 79, off: true }} />
                <ToolItem it={{ n: "split", t: "分割", off: true }} />
              </Row>
            </Rows>
          </GroupBody>
          <GroupLabel $pad={124}>修改<Caret /></GroupLabel>
        </Group>
        <Group $w={84}>
          <GroupBody>
            <Rows>
              <Row $pad={12}>
                <Tool $w={40}><Icon name="draw1" color="#bbb" /></Tool>
                <Icon name="draw2" color="#bbb" />
              </Row>
              <Row $pad={12}><Icon name="arc" color="#bbb" /><Caret $ml={3} /></Row>
            </Rows>
          </GroupBody>
          <GroupLabel $pad={29}>绘图</GroupLabel>
        </Group>
        <Group $w={97}>
          <GroupBody>
            <SmartStack>
              智能布置
              <Caret as="i" />
            </SmartStack>
          </GroupBody>
          <GroupLabel $pad={20}>智能布置</GroupLabel>
        </Group>
      </Ribbon>

      <ComboBar>
        <Combo $pad={18}>首层<Caret as="i" /></Combo>
        <Combo>墙<Caret as="i" /></Combo>
        <Combo>人防门框墙<Caret as="i" /></Combo>
        <Combo>MKQ-1<Caret as="i" /></Combo>
      </ComboBar>

      <Main>
        <LeftPanel>
          <CloseStrip><CloseX /></CloseStrip>
          <LeftTitle><span>导航栏</span></LeftTitle>
          <LeftIcons>
            <IconTab><Icon name="listbtn" size={20} /></IconTab>
            <IconTab><Icon name="detailbtn" size={20} /></IconTab>
          </LeftIcons>
          <LeftBody>
            <NavList>
              {NAV.map((n, i) =>
                n.s !== undefined ? (
                  <NavSection key={i}><span>{n.s}</span></NavSection>
                ) : (
                  <NavItem key={i} $on={n.on}><NavGlyph />{n.t}</NavItem>
                )
              )}
            </NavList>
            <ScrollTrack $w={18}><ScrollThumb $top={21} $h={333} $x={4} /></ScrollTrack>
          </LeftBody>
        </LeftPanel>

        <MiddleCol>
          <Panel $h={488}>
            <CloseStrip><CloseX /></CloseStrip>
            <Tabs>
              <TabBtn $on>构件列表</TabBtn>
              <TabBtn>图纸管理</TabBtn>
            </Tabs>
            <CompToolbar>
              <Tool $w={84}><Icon name="new" />新建<Caret $ml={6} /></Tool>
              <Tool $w={71}><Icon name="copy" />复制</Tool>
              <Tool $w={69}><Icon name="trash" />删除</Tool>
              <Tool><Icon name="layercopy" />层间复制</Tool>
              <MoreBtn>▶▶</MoreBtn>
            </CompToolbar>
            <SearchRow>
              搜索构件...
              <svg width="14" height="14" viewBox="0 0 14 14" fill="none" stroke="#bdbdbd" strokeWidth="1.4"><circle cx="6.2" cy="6.2" r="4.8" /><path d="M10 10l3 3" /></svg>
            </SearchRow>
            <TreeBox>
              <TreeHead><Caret $ml={0} />人防门框墙</TreeHead>
              <TreeChip>MKQ-1  {"<0>"}</TreeChip>
            </TreeBox>
          </Panel>
          <Panel $h={291}>
            <CloseStrip><CloseX /></CloseStrip>
            <Tabs>
              <TabBtn $on>属性列表</TabBtn>
              <TabBtn>图层管理</TabBtn>
            </Tabs>
            <PropTableWrap>
              <PropTable>
                <colgroup>
                  <col width="27" /><col width="126" /><col width="118" /><col width="51" />
                </colgroup>
                <thead>
                  <tr>
                    <HeadCell />
                    <HeadCell>属性名称</HeadCell>
                    <HeadCell $on>属性值</HeadCell>
                    <HeadCell>附加</HeadCell>
                  </tr>
                </thead>
                <tbody>
                  {ROWS.map(([n, k, v]) => {
                    const on = n === "9";
                    return (
                      <tr key={n}>
                        <NumCell $on={on}>{n}</NumCell>
                        <NameCell>{k}</NameCell>
                        <ValueCell $on={on}>
                          {on ? <ValueInner>{v}<i /></ValueInner> : v}
                        </ValueCell>
                        <CheckCell><CheckBox /></CheckCell>
                      </tr>
                    );
                  })}
                </tbody>
              </PropTable>
              <ScrollTrack $w={21}><ScrollThumb $top={69} $h={49} $x={6} /></ScrollTrack>
            </PropTableWrap>
            <PanelFoot><OutlineBtn>组合参数图</OutlineBtn></PanelFoot>
          </Panel>
        </MiddleCol>

        <Canvas>
          <CanvasSvg viewBox="488 110 942 783">
            <polygon points="488,227 508,207 690,388 690,420 496,420 496,607 488,598" fill="#8000ff" />
            <path d="M508 207L690 388M488 598L496 607" stroke="#e6c800" strokeWidth="1" fill="none" />
            <rect x="1358" y="599" width="72" height="125" fill="#4d4d4d" />
            <g stroke="#7f7f7f" strokeWidth="1" fill="none">
              {canvasLines.map((d) => <path key={d} d={d} />)}
            </g>
            <g stroke="#0d8f8f" strokeWidth="1.2" fill="none">
              <path d="M488 192L569 110" stroke="#0a6a6a" />
              <path d="M588 210L688 110M1358 143L1391 110M1410 209L1430 188" stroke="#0a7878" />
              <path d="M488 209.5H700M1358 209.5H1430" strokeWidth="2" stroke="#069a9a" />
              <path d="M508 158L492 177L513 179Z" stroke="#0a7070" />
              <path d="M1358 425L1430 523" stroke="#08b0b0" />
            </g>
            <g stroke="#5f5f5f" strokeWidth="1.4">
              {crosses.map(([x, y]) => <path key={`${x}${y}`} d={`M${x - 20} ${y}H${x + 20}M${x} ${y - 20}V${y + 20}`} />)}
            </g>
            <polyline points="1119,813 1102,828 1102,850 1132,873 1249,873 1278,850 1278,826 1260,813" fill="none" stroke="#bdbdbd" strokeWidth="1.2" />
            <g stroke="#10a810" strokeWidth="1.2" fill="none">
              <path d="M1084 813L1023 855L1049 883L1097 813" />
              <path d="M1054 893L1084 825L1095 813" />
              <path d="M1132 813L1212 893" />
            </g>
          </CanvasSvg>
        </Canvas>
      </Main>

      <StatusBar>
        <StatusText $w={54}>5.5</StatusText>
        <StatusText $w={50}>标高：</StatusText>
        <StatusText $w={115} $ls={0.5}>-5.55~-0.05</StatusText>
        <StatusText $w={129}>选中图元：0</StatusText>
        <StatusText $w={130}>隐藏图元：0</StatusText>
        <SquareBtn><Icon name="corner" /></SquareBtn>
        <SquareBtn $w={43} $ml={5} $on><Icon name="rectsel" /><Caret $ml={0} /></SquareBtn>
        <SquareBtn $ml={9}><Icon name="cross" /></SquareBtn>
        <SquareBtn $w={43} $ml={9}><Icon name="angle" /><Caret $ml={0} /></SquareBtn>
        <SquareBtn $w={43} $ml={6}><Icon name="plusbar" /><Caret $ml={0} /></SquareBtn>
        <SquareBtn $w={28} $ml={6}><Icon name="monitor" /></SquareBtn>
        <SquareBtn $w={31} $ml={5}><Icon name="arcdot" /></SquareBtn>
        <Tool>
          <HintSpacer />
          <Icon name="resize" color="#444" />
          按鼠标左键指定插入点,按右键结束或 ESC 取消
        </Tool>
      </StatusBar>
      <BottomStrip />

      <SectionWin>
        <SectionTitle>截面编辑</SectionTitle>
        <SectionMenu><span>选择截面类型</span><span>保存为模板</span></SectionMenu>
        <SectionTools>
          <SelectChip>选择</SelectChip>
          <VSep />
          <Radio $on $ml={2} />纵筋
          <Radio $ml={30} />箍筋
        </SectionTools>
        <SectionDraw>
          <DrawSvg viewBox="497 529 467 316">
            <g stroke="#3b3b3b" strokeDasharray="5 4" fill="none">
              {GRID_X.map((x) => <path key={x} d={`M${x} 585V845`} />)}
              {GRID_Y.map((y) => <path key={y} d={`M518 ${y}H964`} />)}
            </g>
            <g fill="#4a4a4a" fontFamily="Liberation Mono, monospace" fontSize="15">
              {[598, 624, 650, 675, 701, 727, 752, 778, 804].map((y) => <text key={y} x="509" y={y + 5}>100</text>)}
              {[553, 579, 605, 631, 657, 682].map((x) => <text key={x} x={x} y="845">100</text>)}
            </g>
            <path d="M650 624H568V676H644" fill="none" stroke="#f5f5f5" strokeWidth="3" strokeDasharray="12 8" />
            <path d="M644.5 625V676M643 676V753H690" fill="none" stroke="#e6e6e6" strokeWidth="2" />
            <path d="M576 634V666H690M576 634H690" fill="none" stroke="#9ec6e4" strokeDasharray="3 2" />
            <path d="M609 631H690M652 631V744H690M652 671H690M652 712H690M652 680L664 692L652 705" fill="none" stroke="#b81c2a" strokeWidth="3.5" />
            <path d="M557 624V753M551 624H565M551 676H565M551 753H565M566 763H690M644 757V769" fill="none" stroke="#12c312" strokeWidth="1.3" />
            <g fill="#0a8f0a" fontSize="8" fontFamily="Liberation Mono, monospace">
              <text x="576" y="730">C12@150</text>
              <text x="668" y="818">C12@150</text>
            </g>
            <text x="649" y="626" fill="#18c818" fontSize="16" fontFamily="Liberation Mono, monospace">l&gt;f</text>
            <g fill="#aaa" fontSize="9" fontFamily="Liberation Mono, monospace">
              <text x="538" y="718">300</text>
              <text x="672" y="777">300</text>
            </g>
            <path d="M612 726L650 676M640 770L650 800M610 728L640 718M680 585L660 620" stroke="#777" strokeDasharray="3 3" fill="none" />
          </DrawSvg>
          <RebarForm>钢筋信息:<RebarInput>C12@150</RebarInput></RebarForm>
        </SectionDraw>
        <SectionFoot>
          <SquareBtn><Icon name="corner" /></SquareBtn>
          <SquareBtn $on><Icon name="slope" /></SquareBtn>
          <SquareBtn $on><Icon name="perp" /></SquareBtn>
          <SquareBtn><Icon name="plusbar" /></SquareBtn>
          <FootMsg>(X: -344 Y: 413)选择钢筋进行编辑，选择标注进</FootMsg>
          <Grip viewBox="0 0 10 10" fill="#666">
            <rect x="7" y="0" width="2" height="2" /><rect x="4" y="3" width="2" height="2" /><rect x="7" y="3" width="2" height="2" />
            <rect x="1" y="6" width="2" height="2" /><rect x="4" y="6" width="2" height="2" /><rect x="7" y="6" width="2" height="2" />
          </Grip>
        </SectionFoot>
      </SectionWin>

      <Dialog>
        <DialogHead>
          选择截面类型
          <CloseX size={13} color="#777" />
        </DialogHead>
        <DialogTools>
          <DialogTool><Icon name="new" color="#bdbdbd" />新建</DialogTool>
          <DialogTool><Icon name="trash" color="#bdbdbd" />删除</DialogTool>
          <DialogTool><Icon name="import" color="#bdbdbd" />导入</DialogTool>
          <DialogTool><Icon name="export" color="#bdbdbd" />导出</DialogTool>
        </DialogTools>
        <DialogBody>
          <SideTabs>
            <SideTab $on><span>系</span><span>统</span><span>内</span><span>置</span></SideTab>
            <SideTab><span>自</span><span>定</span><span>义</span><span>库</span></SideTab>
          </SideTabs>
          <GalleryFrame>
            <Gallery>
              {THUMBS.map((th, i) => (
                <Cell key={th.l} $on={i === 0}><Thumb th={th} /></Cell>
              ))}
            </Gallery>
            <ScrollTrack $w={19}><ScrollThumb $top={17} $h={213} $x={6} $t={10} /></ScrollTrack>
          </GalleryFrame>
        </DialogBody>
        <DialogFoot>
          <PrimaryBtn>确定</PrimaryBtn>
          <GhostBtn>取消</GhostBtn>
        </DialogFoot>
      </Dialog>

      <ArrowLayer viewBox="0 0 1430 940">
        <polygon points="874,269 890,277 888,283 1245,862 1244,862 881,289 874,286" fill="#f5201a" />
        <polygon points="385,733 398,727 400,731 1163,878.5 1163,879.5 400,741 398,746" fill="#f5201a" />
      </ArrowLayer>
    </Page>
  );
}
